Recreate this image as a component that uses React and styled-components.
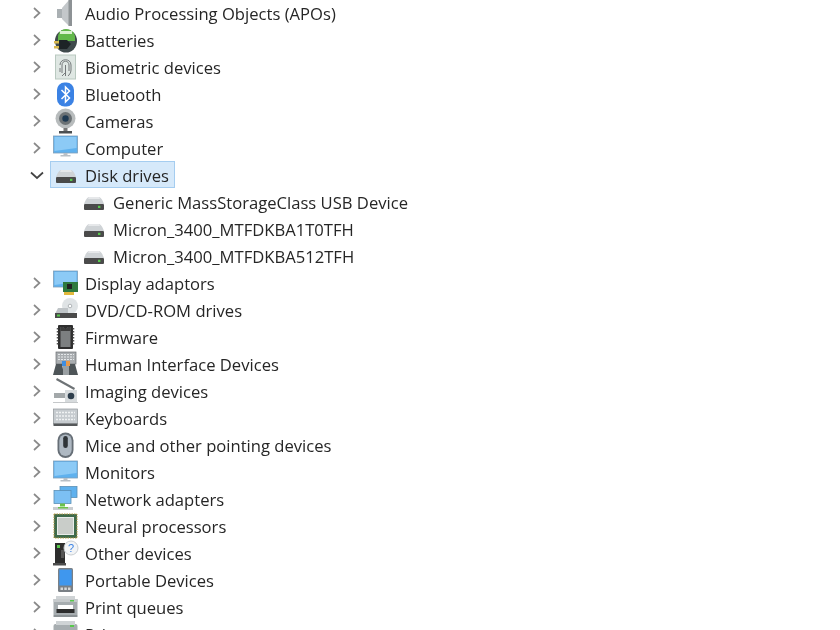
import React from "react";
import styled, { createGlobalStyle } from "styled-components";

const Global = createGlobalStyle`
  html, body { margin: 0; background: #fff; }
`;
const Tree = styled.div`
  height: 630px; width: 840px; overflow: hidden; background: #fff;
  font-family: "Open Sans", "Noto Sans", sans-serif; font-size: 16.63px; color: #262626;
  filter: blur(0.35px);
`;
const List = styled.div`
  margin-top: -1px;
`;
const Row = styled.div`
  height: 27px; display: flex; align-items: center;
  padding-left: ${p => (p.$child ? 80 : 27)}px;
`;
const Toggle = styled.span`
  width: 20px; height: 27px; margin-right: 3px; flex: none; display: flex; align-items: center; justify-content: center;
  svg { display: block; }
`;
const Item = styled.div`
  display: flex; align-items: center; height: 25px; padding: 0 5px 0 ${p => (p.$child ? 0 : 2)}px;
  border: 1px solid ${p => (p.$selected ? "#a5cdf0" : "transparent")};
  background: ${p => (p.$selected ? "#d6e9fa" : "transparent")};
  gap: 6px;
`;
const Glyph = styled.svg`
  width: 26px; height: 26px; flex: none; display: block;
`;
const Label = styled.span`
  white-space: nowrap; line-height: 25px; padding-top: 1px;
`;

const Chevron = ({ open }) => (
  <Toggle>
    <svg width="14" height="14" viewBox="0 0 14 14" fill="none" stroke={open ? "#444" : "#8a8a8a"} strokeWidth="1.7">
      {open ? <path d="M1 4.500 7 10l6-5.500" /> : <path d="M4 2 9.500 7 4 12" />}
    </svg>
  </Toggle>
);

const Screen = ({ x = 2, y = 3, w = 22, h = 14, stand = true }) => (
  <>
    <rect x={x} y={y} width={w} height={h} fill="#5fb1ee" stroke="#7d9db8" strokeWidth=".8" />
    <path d={`M${x + 1} ${y + 1}h${w - 2}v${h - 6}L${x + 1} ${y + h - 2}z`} fill="#8ccaf6" />
    {stand && <path d={`M${x + w / 2 - 2} ${y + h}h4v2h3v1.500h-10V${y + h + 2}h3z`} fill="#b9c0c6" />}
  </>
);
const Drive = () => (
  <>
    <path d="M3 15Q5 9 8 8h10q3 1 5 7z" fill="#cfd3d6" />
    <path d="M8 8h10l1 2H7z" fill="#e6e8ea" />
    <rect x="3" y="15" width="20" height="6" rx="1" fill="#4a4a4a" />
    <rect x="17" y="16.800" width="2.400" height="2.200" fill="#58c84c" />
  </>
);

const icons = {
  audio: <><path d="M4 9h5v9H4z" fill="#aab0b3" /><path d="M9 8 16 0h3v26h-3L9 19z" fill="#c3c7ca" /><path d="M15.500 0h3.500v26h-3.500z" fill="#8d9295" /></>,
  battery: <><ellipse cx="13" cy="14" rx="11" ry="11.500" fill="#3f4a4c" /><path d="M5 10c0-5 4-8 8-8s9 3 9 8v4H5z" fill="#62b84a" /><path d="M7 4h12v3H7z" fill="#d9f1cf" /><path d="M1 14h6v2.500H1zM1 19h6v2.500H1z" fill="#d8b84e" /><path d="M6 13h8l4 4-4 5H6z" fill="#1d2426" /></>,
  bio: <><rect x="2.500" y="1" width="20" height="24" fill="#dfe7e3" stroke="#b9c9c0" /><g fill="none" stroke="#74797a" strokeWidth="1"><path d="M7 11c0-7 11-7 11 0v5c0 3-2 5-3 6" /><path d="M9 19v-8c0-5 7-5 7 0v6" /><path d="M12.500 22V11M7 14v4M9 22l3-3" /></g></>,
  bluetooth: <><rect x="4" y="1.500" width="17" height="24" rx="7.500" fill="#3b82e4" /><path d="m8.500 9 8 8-4 4V6l4 4-8 8" fill="none" stroke="#fff" strokeWidth="1.500" /></>,
  camera: <><circle cx="12.500" cy="10.500" r="10" fill="#b8bcbd" /><circle cx="12.500" cy="10.500" r="6.500" fill="#6c7275" /><circle cx="12.500" cy="10.500" r="3.200" fill="#1f3a52" /><path d="M10.500 20h4v3h-4z" fill="#777" /><path d="M6 23h13v2.500H6z" fill="#4b4f51" /></>,
  computer: <Screen x={0.500} y={1} w={24} h={17} />,
  disk: <Drive />,
  display: <><Screen x={0.500} y={1} w={24} h={16} stand={false} /><rect x="10" y="12" width="15" height="10" fill="#2f7a3f" /><rect x="14" y="14" width="5" height="5" fill="#222" /><path d="M11 22h10v3H11z" fill="#e2b93c" /></>,
  dvd: <><circle cx="17" cy="9" r="8" fill="#dfe3e5" /><circle cx="17" cy="9" r="1.800" fill="#fff" stroke="#b0b5b8" /><path d="M5 11h10v6H2z" fill="#bfc4c7" /><path d="M2 16h22v5H2z" fill="#4a4a4a" /><path d="M4 17.500h3v2H4z" fill="#58c84c" /></>,
  firmware: <><rect x="5" y="1" width="15" height="24" rx="1" fill="#2e2e2e" /><path d="M7.500 3h3a2 2 0 0 0 4 0h3v20h-10z" fill="#7c7f80" /><path d="M7.500 3h3a2 2 0 0 0 4 0h3v4h-10z" fill="#3d3d3d" /><path d="M4.500 4v18M20.500 4v18" stroke="#555" strokeWidth="1.500" strokeDasharray="1.500 1.500" /></>,
  hid: <><rect x="3" y="1" width="20" height="12" fill="#a9adb0" stroke="#6c7073" strokeWidth=".7" /><path d="M5 3.500h16M5 6h16M5 8.500h16" stroke="#e5e8ea" strokeDasharray="2 1" /><path d="M0 24 3 13h6l2 11z" fill="#4e5558" /><path d="M15 24l1-11h6l3 11z" fill="#4e5558" /><path d="M10 13h6v11h-6z" fill="#9aa0a3" /><path d="M9 10h4v5H9z" fill="#3f8ee0" /><path d="M13 10h4v5h-4z" fill="#e89a4a" /></>,
  imaging: <><path d="M4 0 22 10l-1 2L3 2z" fill="#6e7376" /><path d="M1 15h11v5H1z" fill="#a3a8aa" /><rect x="12" y="12" width="12" height="13" fill="#d7dbdd" /><circle cx="18" cy="18" r="3.300" fill="#2e3e4c" /><path d="M0 24h25v1H0z" fill="#c5c8ca" /></>,
  keyboard: <><rect x="0.500" y="4" width="24" height="15" fill="#c6cbcf" stroke="#8f9498" strokeWidth=".7" /><path d="M3 7.500h19M3 11h19M3 14.500h19" stroke="#f0f2f3" strokeWidth="1.500" strokeDasharray="2 1" /><path d="M0.500 18.500h24v2.500h-24z" fill="#55585a" /></>,
  mouse: <><rect x="4.500" y="0.500" width="16" height="25.500" rx="8" fill="#666e76" /><rect x="6.300" y="2.500" width="12.400" height="21.500" rx="6.200" fill="#aeb8c2" /><rect x="10.200" y="4" width="4.600" height="12" rx="2.300" fill="#2f3438" /></>,
  monitor: <Screen x={0.500} y={2} w={24} h={17} />,
  network: <><rect x="7" y="0.500" width="17" height="11" fill="#5fb1ee" stroke="#5b8fb5" strokeWidth=".8" /><rect x="1" y="4.500" width="17" height="13" fill="#7cc0f3" stroke="#5b8fb5" strokeWidth=".8" /><path d="M7 17.500h5v3H7z" fill="#6cc24a" /><path d="M0 21h20v3H0z" fill="#c9cdd0" /><path d="M5 21h10v1.500H5z" fill="#6cc24a" /></>,
  neural: <><rect x="1" y="1" width="23" height="24" fill="#3f6b4c" stroke="#b69a45" strokeDasharray="1.500 1" /><rect x="4.500" y="4.500" width="16" height="17" fill="#c9cdc9" stroke="#e9ecea" /></>,
  other: <><path d="M2 3h10v20H2z" fill="#2d2d2d" /><path d="M4 5h3v3H4z" fill="#58c84c" /><path d="M0 23h13v2.500H0z" fill="#4c4c4c" /><path d="M8 10h4l-1 8H8z" fill="#555" /><circle cx="18" cy="8" r="7" fill="#f2f4f6" stroke="#c9ced2" /><text x="18" y="12" fontSize="11" textAnchor="middle" fill="#3b82e4" fontFamily="Liberation Sans">?</text></>,
  portable: <><rect x="5" y="1" width="15" height="24" rx="1.500" fill="#7a8086" /><rect x="6.300" y="2.500" width="12.400" height="16" fill="#3f97ee" /><path d="M7.500 20.500h2.500v2.500H7.500zM11.300 20.500h2.500v2.500h-2.500zM15 20.500h2.500v2.500H15z" fill="#d5d8da" /></>,
  print: <><rect x="0.500" y="5" width="24" height="16" fill="#a7adb0" /><path d="M3 2h19v4H3z" fill="#cfd3d5" /><path d="M0.500 5h24v3H.5z" fill="#c6cacc" /><path d="M17 6h4v1.500h-4z" fill="#58c84c" /><path d="M5 11h15v6H5z" fill="#fff" /><path d="M3.500 15h18v4h-18z" fill="#2d2d2d" /><path d="M0.500 21h24v2h-24z" fill="#8d9396" /></>,
  printers: <><rect x="0.500" y="3" width="24" height="18" rx="2" fill="#a7adb0" /><path d="M3 0h19v4H3z" fill="#cfd3d5" /><path d="M17 4h4v2h-4z" fill="#58c84c" /></>,
};

const rows = [
  ["audio", "Audio Processing Objects (APOs)"],
  ["battery", "Batteries"],
  ["bio", "Biometric devices"],
  ["bluetooth", "Bluetooth"],
  ["camera", "Cameras"],
  ["computer", "Computer"],
  ["disk", "Disk drives", "open"],
  ["disk", "Generic MassStorageClass USB Device", "child"],
  ["disk", "Micron_3400_MTFDKBA1T0TFH", "child"],
  ["disk", "Micron_3400_MTFDKBA512TFH", "child"],
  ["display", "Display adaptors"],
  ["dvd", "DVD/CD-ROM drives"],
  ["firmware", "Firmware"],
  ["hid", "Human Interface Devices"],
  ["imaging", "Imaging devices"],
  ["keyboard", "Keyboards"],
  ["mouse", "Mice and other pointing devices"],
  ["monitor", "Monitors"],
  ["network", "Network adapters"],
  ["neural", "Neural processors"],
  ["other", "Other devices"],
  ["portable", "Portable Devices"],
  ["print", "Print queues"],
  ["printers", "Printers"],
];

export default function App() {
  return (
    <>
      <Global />
      <Tree>
        <List>
          {rows.map(([icon, label, kind], i) => {
            const child = kind === "child";
            const open = kind === "open";
            return (
              <Row key={i} $child={child}>
                {!child && <Chevron open={open} />}
                <Item $child={child} $selected={open}>
                  <Glyph viewBox="0 0 26 26">{icons[icon]}</Glyph>
                  <Label>{label}</Label>
                </Item>
              </Row>
            );
          })}
        </List>
      </Tree>
    </>
  );
}
